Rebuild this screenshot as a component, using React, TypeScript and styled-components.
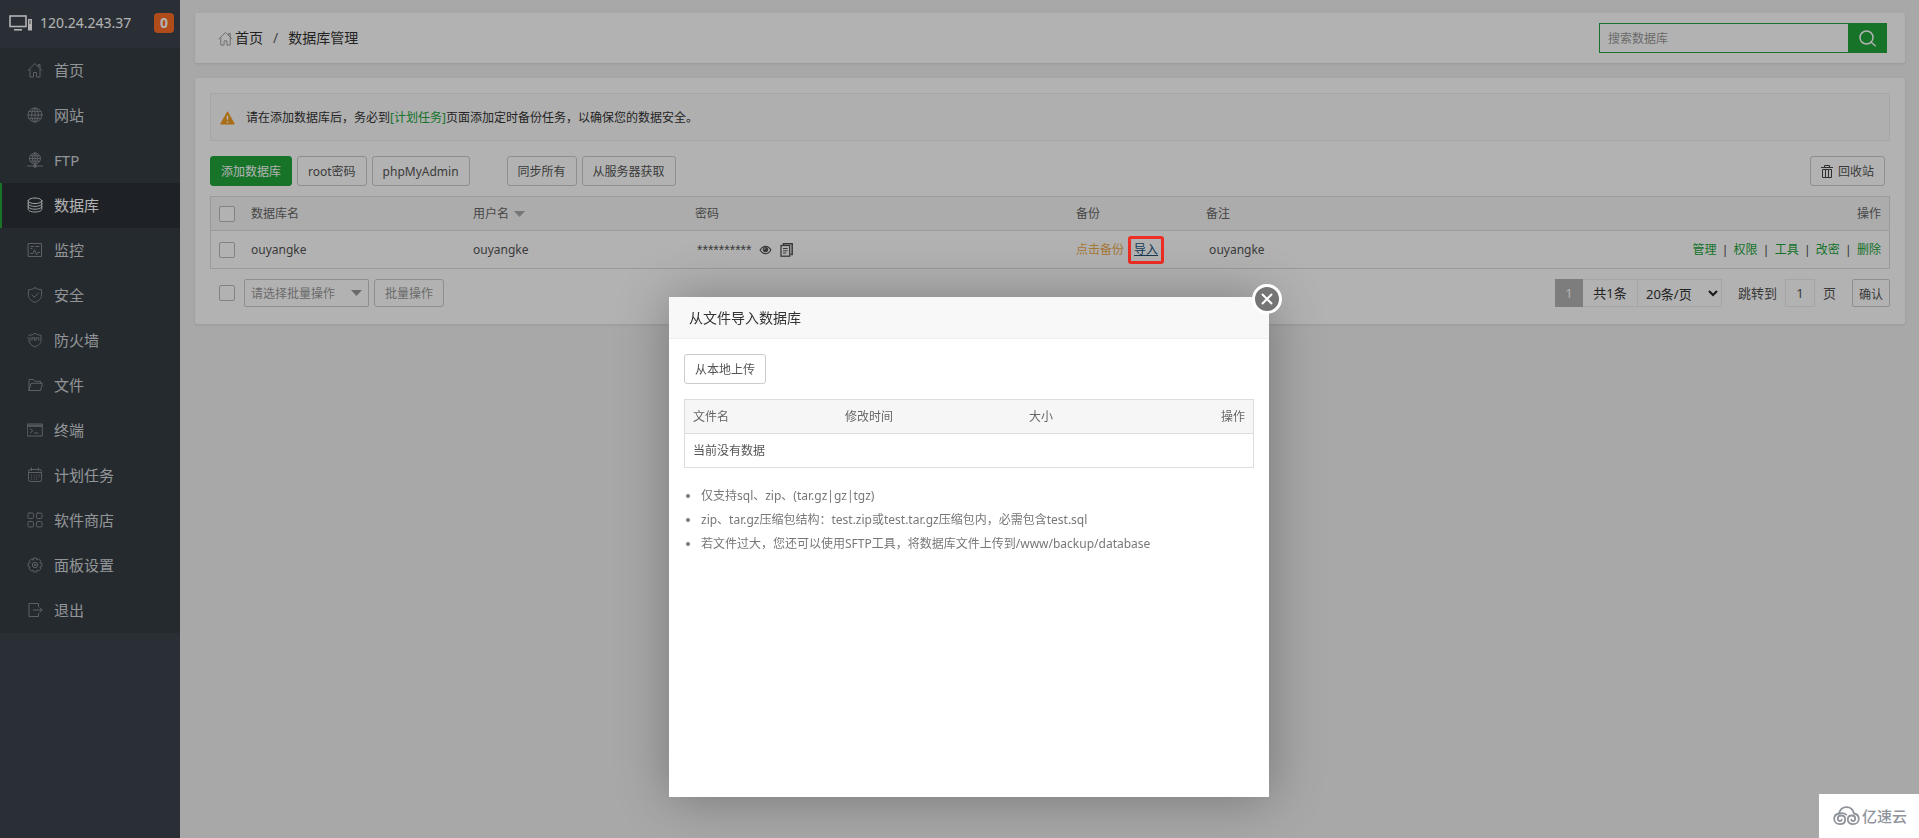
import React from 'react';
import styled, { createGlobalStyle } from 'styled-components';

const green = '#20a53a';

const GlobalStyle = createGlobalStyle`
  * { box-sizing: border-box; }
  body {
    margin: 0;
    background: #f1f1f1;
    color: #555;
    font: 12px/20px "Noto Sans", "Noto Sans CJK SC", sans-serif;
  }
  button, input, select { font: inherit; color: inherit; margin: 0; }
  a { color: ${green}; text-decoration: none; }
`;

/* ---------- icons ---------- */

const Svg = ({ size = 16, w = 1, children }: { size?: number; w?: number; children: React.ReactNode }) => (
  <svg width={size} height={size} viewBox="0 0 16 16" fill="none" stroke="currentColor" strokeWidth={w}
    strokeLinejoin="round" strokeLinecap="round" aria-hidden="true">{children}</svg>
);

const home = <><path d="M1 8.5 8 1.5l7 7M11.5 4.5V2.5h1.5V6M3 7.5V15h3.5v-4.5h3V15H13V7.5" /></>;

const icons: Record<string, React.ReactNode> = {
  home,
  globe: <><circle cx="8" cy="8" r="7" /><ellipse cx="8" cy="8" rx="3.3" ry="7" /><path d="M8 1v14M1 8h14M2 4.6h12M2 11.4h12" /></>,
  ftp: <><circle cx="8" cy="6.5" r="5.5" /><ellipse cx="8" cy="6.5" rx="2.6" ry="5.5" /><path d="M8 1v11M2.5 6.5h11M3.3 3.8h9.4M3.3 9.2h9.4M0.5 14h15" /><circle cx="8" cy="14" r="1.4" fill="currentColor" /></>,
  database: <><ellipse cx="8" cy="3.8" rx="6.8" ry="2.8" /><path d="M1.2 3.8v8.4c0 1.6 3 2.8 6.8 2.8s6.8-1.2 6.8-2.8V3.8M1.2 6.6c0 1.6 3 2.8 6.8 2.8s6.8-1.2 6.8-2.8M1.2 9.4c0 1.6 3 2.8 6.8 2.8s6.8-1.2 6.8-2.8" /></>,
  monitor: <><rect x="1.5" y="1.5" width="13" height="13" /><path d="M4 4.5h3M9 4.5h3M4 6.5h1M3.5 11.5H6l1.5-3.8 2 5 1.2-2.2h1.8" /></>,
  shield: <><path d="M8 .8c2.2 1.3 4.3 1.9 6.6 2v5.4c0 3.4-2.8 5.600-6.600 7.200C4.200 13.800 1.400 11.600 1.400 8.200V2.800C3.700 2.700 5.800 2.100 8 .8Z" /><path d="m5 8 2.300 2.300L11.400 6" /></>,
  firewall: <><path d="M2 3.300c2.300-.1 4.200-.8 6-2 1.800 1.200 3.700 1.900 6 2v5c0 3.300-2.500 5.200-6 6.700-3.200-1.400-5.400-3-5.900-5.700" /><path d="M.8 6h2.500M1.500 8h2M5 5.800v2.500M5 5.800h1.600M7.600 5.800v2.500M9 8.300V5.800h1.500M11.800 5.800v2.500" /></>,
  folder: <path d="M2 13.500V2.500h4.500L8 4.300h5.500v2M2 13.500 4 6.300h11.500l-2 7.200H2Z" />,
  terminal: <><rect x=".7" y="2" width="14.600" height="12" /><path d="M1 3.300h14M1 4.300h14" /><path d="m3.300 6.800 2.500 2-2.500 2M7.500 11H11" /></>,
  calendar: <><rect x="1.500" y="2.500" width="13" height="12" rx="2" /><path d="M1.500 5.500h13M4.500 1v2.500M11.500 1v2.500" /><path d="M4.500 8.200h.1M7 8.200h.1M9.500 8.200h.1M12 8.200h.1M4.500 10.200h.1M7 10.200h.1M9.500 10.200h.1M12 10.200h.1M4.500 12.200h.1M7 12.200h.1M9.500 12.200h.1" /></>,
  grid: <><rect x="1" y="1" width="5.500" height="5.500" rx="1.200" /><rect x="9.500" y="1" width="5.500" height="5.500" rx="1.200" /><rect x="1" y="9.500" width="5.500" height="5.500" rx="1.200" /><rect x="9.500" y="9.500" width="5.500" height="5.500" rx="1.200" /></>,
  gear: <><path d="M6.600 1h2.800l.5 2 1.800-1 2.200 2.200-1 1.700 2 .6v2.900l-2 .6 1 1.800-2.200 2.200-1.800-1-.5 2H6.600l-.6-2-1.700 1-2.200-2.200 1-1.800-2-.6V6.500l2-.6-1-1.700L4.300 2 6 3Z" /><circle cx="8" cy="8" r="2.700" /><circle cx="8" cy="8" r=".7" /></>,
  exit: <><path d="M11.500 4.500V1.500H2v13h9.500v-3M6.500 8H15M12.800 5.800 15 8l-2.200 2.200" /></>,
};

/* ---------- page frame ---------- */

const Page = styled.div`
  display: flex;
  min-height: 100vh;
`;

const Sidebar = styled.aside`
  flex: none;
  width: 180px;
  background: #3c444d;
`;

const Host = styled.header`
  display: flex;
  align-items: center;
  height: 48px;
  padding: 0 6px 3px 9px;
  color: #fff;
  font-size: 14px;
  > svg { margin-right: 8px; }
`;

const Badge = styled.span`
  margin-left: auto;
  width: 20px;
  height: 20px;
  border-radius: 4px;
  background: #fc6d26;
  color: #fff;
  font-weight: bold;
  text-align: center;
`;

const Menu = styled.ul`
  margin: 0;
  padding: 0;
  list-style: none;
  background: #353d44;
`;

const MenuLink = styled.a<{ $active?: boolean }>`
  display: flex;
  align-items: center;
  gap: 11px;
  height: 45px;
  padding: 0 0 2px 25px;
  border-left: ${p => (p.$active ? 2 : 2)}px solid ${p => (p.$active ? green : 'transparent')};
  background: ${p => (p.$active ? '#2c3138' : 'transparent')};
  color: ${p => (p.$active ? '#fff' : '#d2d5d8')};
  font-size: 15px;
  svg { color: ${p => (p.$active ? '#e8eaeb' : '#848a90')}; }
`;

const Main = styled.main`
  flex: 1;
  min-width: 0;
  padding: 13px 14px 0 15px;
`;

const Card = styled.section`
  background: #fff;
  border-radius: 2px;
  box-shadow: 0 1px 3px rgba(0, 0, 0, 0.1);
`;

const TopBar = styled(Card)`
  display: flex;
  align-items: center;
  justify-content: space-between;
  height: 50px;
  padding: 0 18px 0 23px;
  margin-bottom: 15px;
`;

const Crumbs = styled.nav`
  display: flex;
  align-items: center;
  gap: 10px;
  color: #666;
  font-size: 14px;
  a { display: flex; align-items: center; gap: 2px; color: #333; }
  svg { color: #999; }
`;

const Search = styled.form`
  display: flex;
  height: 30px;
  input {
    width: 249px;
    padding: 1px 8px 0;
    border: 1px solid ${green};
    border-right: 0;
    border-radius: 0;
    background: #fff;
    outline: 0;
  }
  input::placeholder { color: #999; opacity: 1; }
  button {
    display: grid;
    place-items: center;
    width: 39px;
    border: 0;
    padding: 0;
    background: ${green};
    color: #fff;
  }
`;

const Content = styled(Card)`
  padding: 15px 15px 17px;
`;

const Notice = styled.div`
  display: flex;
  align-items: center;
  gap: 11px;
  height: 48px;
  padding: 1px 9px 0;
  margin-bottom: 15px;
  border: 1px solid #eee;
  background: #fbfbfb;
  color: #333;
`;

const Toolbar = styled.div`
  display: flex;
  gap: 5px;
  margin-bottom: 10px;
  padding-right: 5px;
`;

const Group = styled.div<{ $end?: boolean }>`
  display: flex;
  gap: 5px;
  margin-right: ${p => (p.$end ? 0 : 32)}px;
  margin-left: ${p => (p.$end ? 'auto' : 0)};
`;

const Button = styled.button<{ $primary?: boolean; $small?: boolean; $muted?: boolean }>`
  display: inline-flex;
  align-items: center;
  gap: 5px;
  height: ${p => (p.$small ? 28 : 30)}px;
  padding: 2px 10px 0;
  border: 1px solid ${p => (p.$primary ? green : '#ccc')};
  border-radius: 3px;
  background: ${p => (p.$primary ? green : '#fff')};
  color: ${p => (p.$primary ? '#fff' : p.$muted ? '#999' : '#555')};
  white-space: nowrap;
`;

const Table = styled.table<{ $row: number }>`
  width: 100%;
  table-layout: fixed;
  border-collapse: separate;
  border-spacing: 0;
  border: 1px solid #ddd;
  th, td {
    padding: 0 8px;
    text-align: left;
    font-weight: normal;
    white-space: nowrap;
  }
  th { height: 34px; background: #f6f6f6; border-bottom: 1px solid #ddd; color: #666; }
  td { height: ${p => p.$row}px; }
  th:last-child, td:last-child:not(:first-child) { text-align: right; }
`;

const Tick = styled.input.attrs({ type: 'checkbox' })`
  appearance: none;
  display: block;
  flex: none;
  width: 16px;
  height: 16px;
  border: 1px solid #bbb;
  border-radius: 2px;
  background: #fff;
`;

const Inline = styled.div<{ $gap: number }>`
  display: flex;
  align-items: center;
  gap: ${p => p.$gap}px;
`;

const Password = styled(Inline)`
  padding-left: 2px;
  span { font-family: "Liberation Sans", sans-serif; font-size: 14px; }
  button { display: flex; padding: 0; border: 0; background: none; color: #555; }
`;

const Warn = styled.a`
  color: #f0ad4e;
`;

/* the frame sits above the shade so it keeps its full red */
const ImportLink = styled.a`
  position: relative;
  color: #23527c;
  text-decoration: underline;
  &::after {
    content: '';
    position: absolute;
    z-index: 20;
    inset: -4px -6px;
    border: 3px solid #ee2d24;
    border-radius: 3px;
  }
`;

const Actions = styled.div`
  display: flex;
  justify-content: flex-end;
  gap: 7px;
  span { font-family: "Liberation Sans", sans-serif; }
`;

const Footer = styled.div`
  display: flex;
  align-items: center;
  margin-top: 10px;
  padding-left: 9px;
`;

const SelectBox = styled.div<{ $width: number; $soft?: boolean }>`
  display: grid;
  align-items: center;
  width: ${p => p.$width}px;
  height: 28px;
  > * { grid-area: 1 / 1; }
  select {
    appearance: none;
    width: 100%;
    height: 28px;
    padding: 1px ${p => (p.$soft ? 8 : 6)}px 0;
    border: 1px solid ${p => (p.$soft ? '#ececec' : '#ccc')};
    border-radius: ${p => (p.$soft ? 0 : 2)}px;
    background: #fff;
    color: ${p => (p.$soft ? '#333' : '#999')};
    font-size: ${p => (p.$soft ? 13 : 12)}px;
    opacity: 1;
  }
  svg {
    justify-self: end;
    margin-right: ${p => (p.$soft ? 4 : 7)}px;
    pointer-events: none;
  }
`;

const Pager = styled.nav`
  display: flex;
  align-items: center;
  margin-left: auto;
  font-size: 13px;
  line-height: 26px;
  label { display: flex; align-items: center; gap: 8px; margin: 0 16px; }
  input {
    width: 30px;
    height: 28px;
    padding: 0;
    border: 1px solid #ececec;
    background: #fff;
    text-align: center;
  }
`;

const Current = styled.span`
  width: 28px;
  height: 28px;
  line-height: 28px;
  background: #b3b3b3;
  color: #fff;
  text-align: center;
`;

const Total = styled.span`
  width: 54px;
  height: 28px;
  border: 1px solid #ececec;
  border-width: 1px 0;
  color: #333;
  text-align: center;
`;

const Confirm = styled.button`
  width: 38px;
  height: 28px;
  padding: 3px 0 0;
  border: 1px solid #ccc;
  border-radius: 2px;
  background: #fff;
  font-size: 12px;
  line-height: 20px;
`;

/* ---------- dialog ---------- */

const Shade = styled.div`
  position: fixed;
  z-index: 10;
  inset: 0;
  background: rgba(0, 0, 0, 0.3);
`;

const Dialog = styled.div`
  position: fixed;
  z-index: 30;
  top: 297px;
  left: 669px;
  width: 600px;
  height: 500px;
  background: #fff;
  box-shadow: 1px 1px 50px rgba(0, 0, 0, 0.3);
`;

const DialogTitle = styled.h2`
  height: 42px;
  margin: 0;
  padding: 0 20px;
  border-bottom: 1px solid #eee;
  background: #f8f8f8;
  color: #333;
  font-size: 14px;
  font-weight: normal;
  line-height: 42px;
`;

const DialogBody = styled.div`
  padding: 15px;
  table { margin-top: 15px; }
`;

const Close = styled.button`
  position: absolute;
  top: -13px;
  right: -13px;
  display: grid;
  place-items: center;
  width: 30px;
  height: 30px;
  padding: 0;
  border: 3px solid #fff;
  border-radius: 50%;
  background: #757575;
  color: #fff;
`;

const Tips = styled.ul`
  margin: 16px 0 0;
  padding: 0 0 0 17px;
  color: #777;
  line-height: 24px;
`;

const Watermark = styled.div`
  position: fixed;
  z-index: 40;
  right: 0;
  bottom: 0;
  display: flex;
  align-items: center;
  gap: 2px;
  width: 100px;
  height: 44px;
  padding-left: 14px;
  background: #fff;
  color: #8f939b;
  font-size: 15px;
  font-weight: 500;
`;

const menu = [
  ['home', '首页'], ['globe', '网站'], ['ftp', 'FTP'], ['database', '数据库'], ['monitor', '监控'],
  ['shield', '安全'], ['firewall', '防火墙'], ['folder', '文件'], ['terminal', '终端'],
  ['calendar', '计划任务'], ['grid', '软件商店'], ['gear', '面板设置'], ['exit', '退出'],
];

const actions = ['管理', '权限', '工具', '改密', '删除'];

const Caret = ({ color = '#999' }: { color?: string }) => (
  <svg width="11" height="6" viewBox="0 0 11 6" aria-hidden="true"><path d="M0 0h11L5.500 6Z" fill={color} /></svg>
);

export default function App() {
  return (
    <>
      <GlobalStyle />
      <Page>
        <Sidebar>
          <Host>
            <svg width="23" height="16" viewBox="0 0 23 16" fill="none" stroke="currentColor" aria-hidden="true">
              <rect x="1" y="1" width="16" height="10.500" strokeWidth="1.600" />
              <path d="M5 14.800h8" strokeWidth="1.600" />
              <rect x="19" y="4" width="4" height="11.500" fill="#fff" stroke="none" />
              <path d="M20.200 6h1.600M20.200 8h1.600" stroke="#3c444d" />
            </svg>
            120.24.243.37
            <Badge>0</Badge>
          </Host>
          <nav>
            <Menu>
              {menu.map(([icon, label]) => (
                <li key={icon}>
                  <MenuLink href="#" $active={icon === 'database'}>
                    <Svg>{icons[icon]}</Svg>{label}
                  </MenuLink>
                </li>
              ))}
            </Menu>
          </nav>
        </Sidebar>

        <Main>
          <TopBar>
            <Crumbs>
              <a href="#"><Svg size={15}>{home}</Svg>首页</a>
              <span>/</span>
              <a href="#">数据库管理</a>
            </Crumbs>
            <Search onSubmit={e => e.preventDefault()}>
              <input type="text" aria-label="搜索数据库" placeholder="搜索数据库" />
              <button type="submit" aria-label="搜索">
                <svg width="17" height="17" viewBox="0 0 17 17" fill="none" stroke="currentColor" strokeWidth="1.500" strokeLinecap="round" aria-hidden="true">
                  <circle cx="7.500" cy="7.500" r="6.500" /><path d="m12.200 12.200 4 3.600" />
                </svg>
              </button>
            </Search>
          </TopBar>

          <Content>
            <Notice>
              <svg width="15" height="14" viewBox="0 0 15 14" aria-hidden="true">
                <path d="M7.500.8 14.300 13H.7Z" fill="#f39c1f" stroke="#f39c1f" strokeLinejoin="round" />
                <path d="M7.500 4.600v4.200M7.500 10.200v1.500" stroke="#fff" strokeWidth="1.500" />
              </svg>
              <span>请在添加数据库后，务必到<a href="#">[计划任务]</a>页面添加定时备份任务，以确保您的数据安全。</span>
            </Notice>

            <Toolbar>
              <Group>
                <Button $primary>添加数据库</Button>
                <Button>root密码</Button>
                <Button>phpMyAdmin</Button>
              </Group>
              <Group>
                <Button>同步所有</Button>
                <Button>从服务器获取</Button>
              </Group>
              <Group $end>
                <Button>
                  <svg width="12" height="14" viewBox="0 0 12 14" fill="none" stroke="#444" aria-hidden="true">
                    <path d="M0 2.500h12M3.500 2V.5h5V2M1.500 4.500v8h9v-8ZM4.500 4.500V12M7.500 4.500V12" />
                  </svg>
                  回收站
                </Button>
              </Group>
            </Toolbar>

            <Table $row={37}>
              <colgroup>
                <col style={{ width: 32 }} /><col style={{ width: 222 }} /><col style={{ width: 222 }} />
                <col style={{ width: 381 }} /><col style={{ width: 130 }} /><col /><col />
              </colgroup>
              <thead>
                <tr>
                  <th><Tick aria-label="全选" /></th>
                  <th>数据库名</th>
                  <th><Inline $gap={5}>用户名 <Caret color="#aaa" /></Inline></th>
                  <th>密码</th>
                  <th>备份</th>
                  <th>备注</th>
                  <th>操作</th>
                </tr>
              </thead>
              <tbody>
                <tr>
                  <td><Tick aria-label="ouyangke" /></td>
                  <td>ouyangke</td>
                  <td>ouyangke</td>
                  <td>
                    <Password $gap={8}>
                      <span>**********</span>
                      <button aria-label="显示密码">
                        <svg width="13" height="12" viewBox="0 0 12 12" aria-hidden="true">
                          <path d="M.6 6C2 3.500 3.800 2.300 6 2.300S10 3.500 11.400 6C10 8.500 8.200 9.700 6 9.700S2 8.500.6 6Z" fill="none" stroke="currentColor" strokeWidth="1.200" />
                          <circle cx="6" cy="5.600" r="2.700" fill="currentColor" /><path d="M4.800 5.500c0-.8.500-1.300 1.300-1.300" stroke="#fff" strokeWidth=".7" fill="none" />
                        </svg>
                      </button>
                      <button aria-label="复制密码">
                        <svg width="13" height="14" viewBox="0 0 13 14" fill="none" stroke="currentColor" aria-hidden="true">
                          <path d="M3.500 2.500V.8h8.700v10.700h-1.700" strokeWidth="1.500" /><rect x="1" y="2.500" width="8.700" height="10.700" strokeWidth="1.300" />
                          <path d="M3 5.500h4.700M3 7.800h4.700M3 10h3.200" />
                        </svg>
                      </button>
                    </Password>
                  </td>
                  <td><Inline $gap={10}><Warn href="#">点击备份</Warn><ImportLink href="#">导入</ImportLink></Inline></td>
                  <td><Inline $gap={0}>&nbsp;ouyangke</Inline></td>
                  <td>
                    <Actions>
                      {actions.map((a, i) => (
                        <React.Fragment key={a}>{i > 0 && <span>|</span>}<a href="#">{a}</a></React.Fragment>
                      ))}
                    </Actions>
                  </td>
                </tr>
              </tbody>
            </Table>

            <Footer>
              <Inline $gap={9}>
                <Tick aria-label="全选" />
                <Inline $gap={5}>
                  <SelectBox $width={125}>
                    <select aria-label="批量操作"><option>请选择批量操作</option></select>
                    <Caret />
                  </SelectBox>
                  <Button $small $muted>批量操作</Button>
                </Inline>
              </Inline>
              <Pager>
                <Current>1</Current>
                <Total>共1条</Total>
                <SelectBox $width={85} $soft>
                  <select aria-label="每页条数"><option>20条/页</option></select>
                  <svg width="10" height="7" viewBox="0 0 10 7" fill="none" stroke="#222" strokeWidth="2" aria-hidden="true"><path d="m1 1 4 4 4-4" /></svg>
                </SelectBox>
                <label>跳转到 <input type="text" defaultValue="1" /> 页</label>
                <Confirm>确认</Confirm>
              </Pager>
            </Footer>
          </Content>
        </Main>
      </Page>

      <Shade />

      <Dialog role="dialog" aria-labelledby="import-title">
        <DialogTitle id="import-title">从文件导入数据库</DialogTitle>
        <Close aria-label="关闭">
          <svg width="12" height="12" viewBox="0 0 12 12" stroke="currentColor" strokeWidth="2" strokeLinecap="round" aria-hidden="true"><path d="m1.500 1.500 9 9M10.500 1.500l-9 9" /></svg>
        </Close>
        <DialogBody>
          <Button>从本地上传</Button>
          <Table $row={33}>
            <colgroup><col style={{ width: 152 }} /><col style={{ width: 184 }} /><col /><col /></colgroup>
            <thead>
              <tr><th>文件名</th><th>修改时间</th><th>大小</th><th>操作</th></tr>
            </thead>
            <tbody>
              <tr><td colSpan={4}>当前没有数据</td></tr>
            </tbody>
          </Table>
          <Tips>
            <li>仅支持sql、zip、(tar.gz|gz|tgz)</li>
            <li>zip、tar.gz压缩包结构：test.zip或test.tar.gz压缩包内，必需包含test.sql</li>
            <li>若文件过大，您还可以使用SFTP工具，将数据库文件上传到/www/backup/database</li>
          </Tips>
        </DialogBody>
      </Dialog>

      <Watermark>
        <svg width="27" height="20" viewBox="0 0 27 20" fill="none" stroke="currentColor" strokeWidth="1.800" strokeLinecap="round" aria-hidden="true">
          <path d="M6 7.500C7 3.500 9.800 1.200 13.500 1.200S20 3.500 21 7.500c3 .6 4.800 2.600 4.800 5.300 0 3.200-2.500 5.400-5.700 5.400-3.300 0-5.300-2-5.300-4.600 0-2.400 1.700-4.100 4-4.100 2 0 3.400 1.300 3.400 3 0 1.500-1.100 2.500-2.400 2.500-.9 0-1.500-.5-1.600-1.300" />
          <path d="M13.300 8.600C11 6.800 8.500 6.800 6 7.500c-3 .6-4.800 2.600-4.800 5.300 0 3.200 2.500 5.400 5.700 5.400 3.300 0 5.300-2 5.300-4.600 0-2.400-1.700-4.100-4-4.100-2 0-3.400 1.300-3.400 3 0 1.500 1.100 2.500 2.400 2.500.9 0 1.500-.5 1.600-1.300" />
        </svg>
        亿速云
      </Watermark>
    </>
  );
}
